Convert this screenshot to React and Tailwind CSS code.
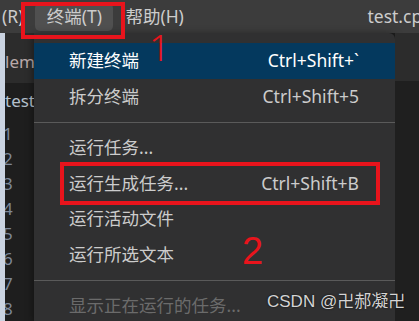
const font = { fontFamily: '"Noto Sans", "Noto Sans CJK SC", sans-serif' };

const MenuItem = ({ label, shortcut, active, disabled }) => (
  <div
    className={`flex h-[35.5px] items-center justify-between pl-[35px] pr-[36px] text-[17.5px] leading-none ${
      active ? 'bg-[#04395e] text-white' : disabled ? 'text-[#6b6b6b]' : 'text-[#cccccc]'
    }`}
  >
    <span>{label}</span>
    {shortcut && <span>{shortcut}</span>}
  </div>
);

const Separator = () => (
  <div className="flex h-[16px] items-center">
    <div className="h-px w-full bg-[#5a5a5a]" />
  </div>
);

export default function App() {
  const lines = [1, 2, 3, 4, 5, 6, 7, 8];

  return (
    <div className="relative h-[321px] w-[419px] overflow-hidden bg-[#1e1e1e]" style={font}>
      {/* menubar */}
      <div className="flex h-[33px] items-center bg-[#3c3c3c] text-[17.5px] text-[#cccccc]">
        <span className="ml-[2px]">(R)</span>
        <span className="ml-[12px] flex h-[28px] w-[78px] items-center justify-center rounded-[5px] bg-[#505050]">
          终端(T)
        </span>
        <span className="ml-[12px]">帮助(H)</span>
        <span className="ml-auto mr-[-14px]">test.cpp</span>
      </div>

      <div className="flex h-[288px]">
        <div className="w-[5px] shrink-0 bg-[#cad3e1]" />

        {/* left editor slice */}
        <div className="flex w-[29px] shrink-0 flex-col overflow-hidden">
          <div className="flex h-[50px] items-center bg-[#2c2c2c] pt-[8px] text-[17px] text-[#b9a9a9]">lemo</div>
          <div className="flex h-[32px] items-center pt-[4px] text-[17px] text-[#b5c0cc]">test</div>
          <div className="flex flex-col pt-[6px] text-[17px] leading-[25px] text-[#7c8798]">
            {lines.map((n) => (
              <span key={n} className="ml-[-2px]">{n}</span>
            ))}
          </div>
        </div>

        {/* dropdown menu */}
        <div className="w-[361px] shrink-0 rounded-tr-[6px] bg-[#303031] pt-[10px] shadow-[0_2px_8px_rgba(0,0,0,0.5)]">
          <MenuItem label="新建终端" shortcut="Ctrl+Shift+`" active />
          <MenuItem label="拆分终端" shortcut="Ctrl+Shift+5" />
          <Separator />
          <MenuItem label="运行任务..." />
          <MenuItem label="运行生成任务..." shortcut="Ctrl+Shift+B" />
          <MenuItem label="运行活动文件" />
          <MenuItem label="运行所选文本" />
          <Separator />
          <MenuItem label="显示正在运行的任务..." disabled />
        </div>

        <div className="flex flex-1 flex-col">
          <div className="h-[48px] bg-[#2c2c2c]" />
          <div className="flex-1 bg-[#1f1f1f]" />
        </div>
      </div>

      {/* annotations */}
      <div className="absolute left-[21px] top-[2px] h-[37px] w-[104px] border-[4px] border-[#e8141c]" />
      <div className="absolute left-[60px] top-[162px] h-[43px] w-[320px] border-[4px] border-[#e8141c]" />
      <div
        className="absolute left-[149px] top-[28px] text-[37px] font-light leading-none text-[#e8141c]"
        style={{ fontFamily: '"Noto Sans", sans-serif' }}
      >
        1
      </div>
      <div
        className="absolute left-[242px] top-[232px] text-[38px] leading-none text-[#e8141c]"
        style={{ fontFamily: '"Liberation Sans", sans-serif' }}
      >
        2
      </div>
      <div
        className="absolute left-[267px] top-[293px] text-[17px] leading-none text-[#d4d4d4] [text-shadow:0_0_2px_rgba(0,0,0,0.8)]"
        style={{ fontFamily: '"Liberation Sans", "Noto Sans CJK SC", sans-serif' }}
      >
        CSDN @卍郝凝卍
      </div>
    </div>
  );
}
